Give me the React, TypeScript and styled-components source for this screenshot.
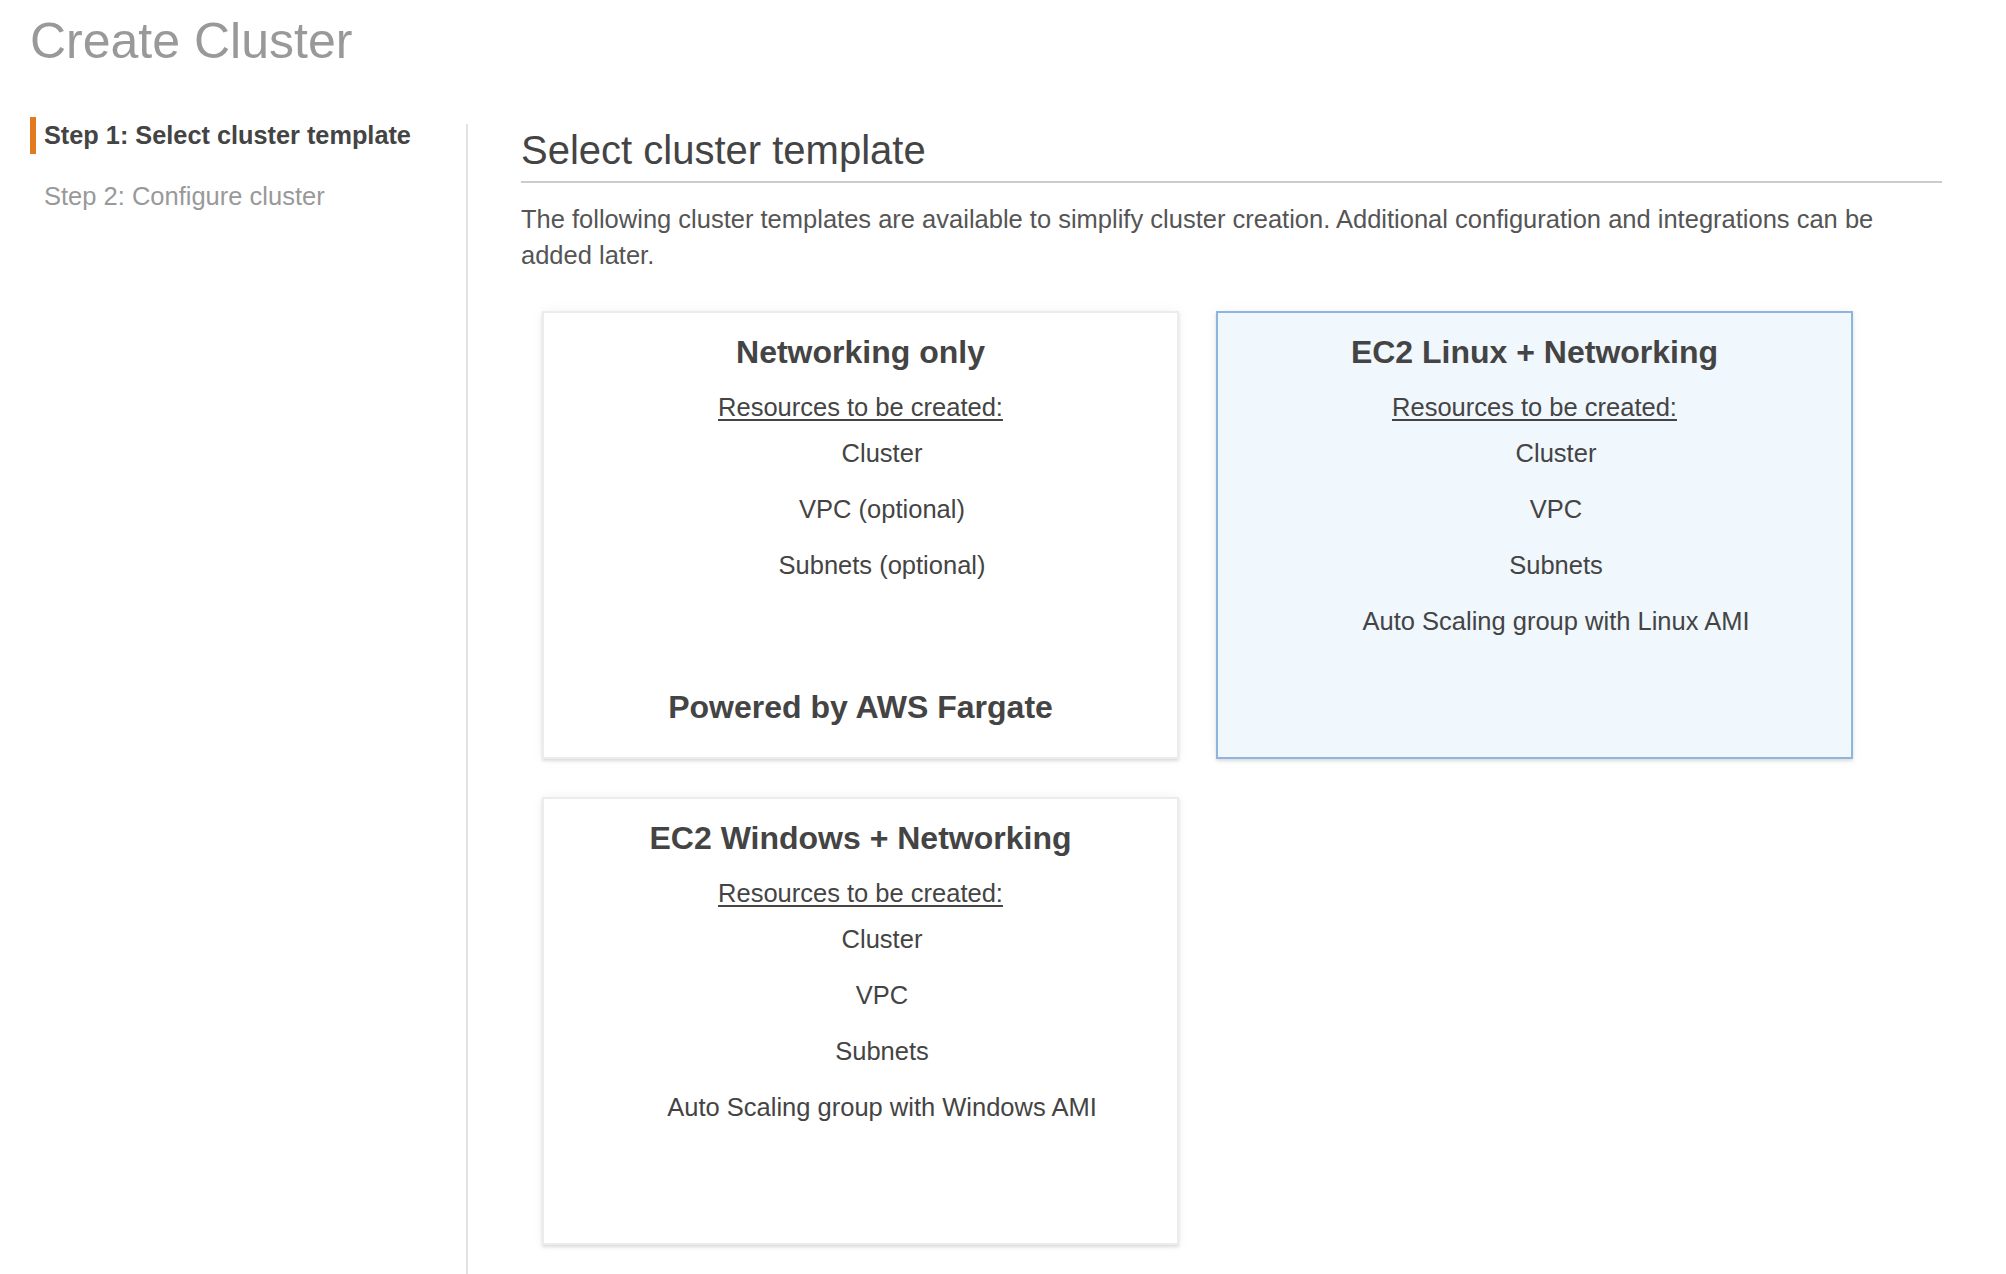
import React, { FC } from "react";
import styled, { createGlobalStyle } from "styled-components";

type Template = {
  title: string;
  resources: string[];
  footer?: string;
  selected?: boolean;
};

const templates: Template[] = [
  {
    title: "Networking only",
    resources: ["Cluster", "VPC (optional)", "Subnets (optional)"],
    footer: "Powered by AWS Fargate",
  },
  {
    title: "EC2 Linux + Networking",
    resources: ["Cluster", "VPC", "Subnets", "Auto Scaling group with Linux AMI"],
    selected: true,
  },
  {
    title: "EC2 Windows + Networking",
    resources: [
      "Cluster",
      "VPC",
      "Subnets",
      "Auto Scaling group with Windows AMI",
    ],
  },
];

const steps = ["Step 1: Select cluster template", "Step 2: Configure cluster"];

const App: FC = () => {
  return (
    <Page>
      <GlobalStyle />
      <PageTitle>Create Cluster</PageTitle>
      <Layout>
        <Steps>
          {steps.map((step, index) => (
            <StepItem key={step} $active={index === 0}>
              {step}
            </StepItem>
          ))}
        </Steps>
        <Main>
          <Heading>Select cluster template</Heading>
          <Intro>
            The following cluster templates are available to simplify cluster
            creation. Additional configuration and integrations can be added
            later.
          </Intro>
          <CardGrid>
            {templates.map((template) => (
              <Card key={template.title} $selected={!!template.selected}>
                <CardTitle>{template.title}</CardTitle>
                <ResourcesLabel>Resources to be created:</ResourcesLabel>
                <ResourceList>
                  {template.resources.map((resource) => (
                    <li key={resource}>{resource}</li>
                  ))}
                </ResourceList>
                {template.footer && <CardFooter>{template.footer}</CardFooter>}
              </Card>
            ))}
          </CardGrid>
        </Main>
      </Layout>
    </Page>
  );
};

export default App;

const GlobalStyle = createGlobalStyle`
  html, body {
    margin: 0;
    padding: 0;
    background: #ffffff;
  }
  body {
    font-family: "Liberation Sans", Arial, sans-serif;
    color: #444444;
  }
  * {
    box-sizing: border-box;
  }
`;

const Page = styled.div`
  min-height: 100vh;
  display: flex;
  flex-direction: column;
  padding: 11px 64px 0 30px;
`;

const PageTitle = styled.h1`
  margin: 0;
  font-size: 50px;
  line-height: 60px;
  font-weight: normal;
  color: #999999;
`;

const Layout = styled.div`
  flex: 1;
  display: flex;
  margin-top: 46px;
`;

const Steps = styled.ul`
  list-style: none;
  margin: 0;
  padding: 0;
  width: 436px;
  flex-shrink: 0;
  display: flex;
  flex-direction: column;
  gap: 24px;
`;

const StepItem = styled.li<{ $active: boolean }>`
  border-left: 6px solid ${(p) => (p.$active ? "#e27a1f" : "transparent")};
  padding-left: 8px;
  line-height: 37px;
  font-size: ${(p) => (p.$active ? "25.3px" : "25.5px")};
  font-weight: ${(p) => (p.$active ? "bold" : "normal")};
  color: ${(p) => (p.$active ? "#444444" : "#999999")};
`;

const Main = styled.main`
  flex: 1;
  margin-top: 7px;
  border-left: 2px solid #e2e2e2;
  padding: 0 0 20px 53px;
`;

const Heading = styled.h2`
  margin: 0;
  font-size: 40px;
  line-height: 48px;
  font-weight: normal;
  color: #444444;
  padding: 2px 0 7px;
  border-bottom: 2px solid #cccccc;
`;

const Intro = styled.p`
  margin: 18px 0 0;
  font-size: 25.5px;
  line-height: 36px;
  color: #555555;
`;

const CardGrid = styled.div`
  display: grid;
  grid-template-columns: repeat(2, 637px);
  grid-auto-rows: 448px;
  column-gap: 37px;
  row-gap: 38px;
  margin-top: 38px;
  padding-left: 21px;
`;

const Card = styled.div<{ $selected: boolean }>`
  display: flex;
  flex-direction: column;
  align-items: center;
  padding: 20px 20px 31px;
  background: ${(p) => (p.$selected ? "#f0f7fd" : "#ffffff")};
  border: 2px solid ${(p) => (p.$selected ? "#8db5df" : "#ececec")};
  box-shadow: 0 2px 3px rgba(0, 0, 0, 0.12), 0 0 12px rgba(0, 0, 0, 0.05);
  text-align: center;
  color: #444444;
`;

const CardTitle = styled.h3`
  margin: 0;
  font-size: 32px;
  line-height: 38px;
  font-weight: bold;
`;

const ResourcesLabel = styled.div`
  margin-top: 18px;
  font-size: 25.5px;
  line-height: 36px;
  text-decoration: underline;
  text-underline-offset: 3px;
`;

const ResourceList = styled.ul`
  list-style: none;
  align-self: stretch;
  margin: 10px 0 0;
  padding: 0 0 0 43px;
  font-size: 25.5px;
  line-height: 36px;

  li + li {
    margin-top: 20px;
  }
`;

const CardFooter = styled.div`
  margin-top: auto;
  font-size: 32px;
  line-height: 38px;
  font-weight: bold;
`;
